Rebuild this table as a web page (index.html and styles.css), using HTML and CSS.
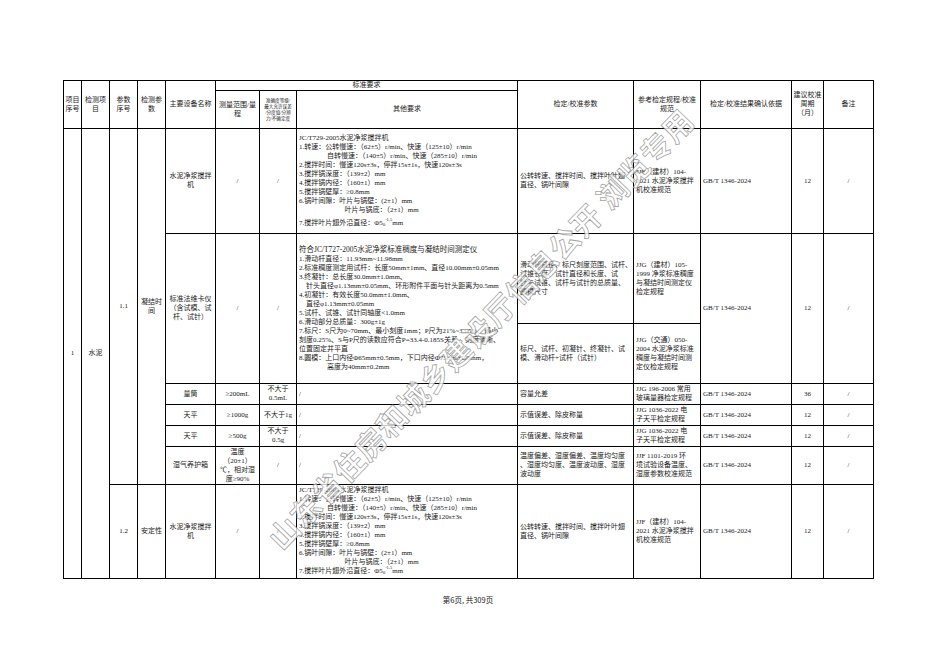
FILE: index.html
```html
<!DOCTYPE html>
<html lang="zh-CN">
<head>
<meta charset="utf-8">
<title>检测设备表</title>
<link rel="stylesheet" href="styles.css">
</head>
<body>
<div class="page">
<table class="sheet">
<colgroup>
<col class="w-no"><col class="w-item"><col class="w-pno"><col class="w-param"><col class="w-dev"><col class="w-range"><col class="w-acc"><col class="w-other"><col class="w-cal"><col class="w-ref"><col class="w-basis"><col class="w-cycle"><col class="w-note">
</colgroup>
<thead>
<tr class="h1">
<th rowspan="2">项目<br>序号</th>
<th rowspan="2">检测项<br>目</th>
<th rowspan="2">参数<br>序号</th>
<th rowspan="2">检测参<br>数</th>
<th rowspan="2">主要设备名称</th>
<th colspan="3">标准要求</th>
<th rowspan="2">检定/校准参数</th>
<th rowspan="2">参考检定规程/校准<br>规范</th>
<th rowspan="2">检定/校准结果确认依据</th>
<th rowspan="2">建议校准<br>周期<br>（月）</th>
<th rowspan="2">备注</th>
</tr>
<tr class="h2">
<th>测量范围/量<br>程</th>
<th class="tiny">准确度等级/<br>最大允许误差<br>/分度值/分辨<br>力/不确定度</th>
<th>其他要求</th>
</tr>
</thead>
<tbody>
<tr class="ra">
<td rowspan="8" class="c">1</td>
<td rowspan="8" class="c">水泥</td>
<td rowspan="7" class="c">1.1</td>
<td rowspan="7" class="c">凝结时<br>间</td>
<td class="c">水泥净浆搅拌<br>机</td>
<td class="c">/</td>
<td class="c">/</td>
<td class="txt">
<div>JC/T729-2005水泥净浆搅拌机</div>
<div>1.转速：公转慢速：（62±5）r/min、快速（125±10）r/min</div>
<div class="in4">自转慢速：（140±5）r/min、快速（285±10）r/min</div>
<div>2.搅拌时间：慢速120s±3s，停拌15s±1s，快速120s±3s</div>
<div>3.搅拌锅深度：（139±2）mm</div>
<div>4.搅拌锅内径：（160±1）mm</div>
<div>5.搅拌锅壁厚：≥0.8mm</div>
<div>6.锅叶间隙：叶片与锅壁：(2±1）mm</div>
<div class="in6">叶片与锅底：（2±1）mm</div>
<div class="gap">7.搅拌叶片翅外沿直径：Φ5<sub>0</sub><sup>-1.5</sup>mm</div>
</td>
<td>公转转速、搅拌时间、搅拌叶叶翅<br>直径、锅叶间隙</td>
<td>JJF（建材）104-<br>2021 水泥净浆搅拌<br>机校准规范</td>
<td>GB/T 1346-2024</td>
<td class="c">12</td>
<td class="c">/</td>
</tr>
<tr class="rb1">
<td rowspan="2" class="c">标准法维卡仪<br>（含试模、试<br>杆、试针）</td>
<td rowspan="2" class="c">/</td>
<td rowspan="2" class="c">/</td>
<td rowspan="2" class="txt">
<div class="lead">符合JC/T727-2005水泥净浆标准稠度与凝结时间测定仪</div>
<div>1.滑动杆直径：11.93mm~11.98mm</div>
<div>2.标准稠度测定用试杆：长度50mm±1mm、直径10.00mm±0.05mm</div>
<div>3.终凝针：总长度30.0mm±1.0mm、</div>
<div class="in1">针头直径φ1.13mm±0.05mm、环形附件平面与针头距离为0.5mm</div>
<div>4.初凝针：有效长度50.0mm±1.0mm、</div>
<div class="in1">直径φ1.13mm±0.05mm</div>
<div>5.试杆、试锥、试针同轴度&lt;1.0mm</div>
<div>6.滑动部分总质量：300g±1g</div>
<div>7.标尺：S尺为0~70mm、最小刻度1mm；P尺为21%~33.5%、最小</div>
<div>刻度0.25%、S与P尺的读数应符合P=33.4-0.185S关系，刻度清晰、</div>
<div>位置固定并平直</div>
<div>8.圆模：上口内径Φ65mm±0.5mm，下口内径Φ75mm±0.5mm，</div>
<div class="in4">高度为40mm±0.2mm</div>
</td>
<td>滑动杆直径、标尺刻度范围、试杆、<br>试锥长度、试针直径和长度、试<br>针与试锥、试杆与试针的总质量、<br>圆模尺寸</td>
<td>JJG（建材）105-<br>1999 净浆标准稠度<br>与凝结时间测定仪<br>检定规程</td>
<td rowspan="2">GB/T 1346-2024</td>
<td rowspan="2" class="c">12</td>
<td rowspan="2" class="c">/</td>
</tr>
<tr class="rb2">
<td>标尺、试杆、初凝针、终凝针、试<br>模、滑动杆+试杆（试针）</td>
<td>JJG（交通）050-<br>2004 水泥净浆标准<br>稠度与凝结时间测<br>定仪检定规程</td>
</tr>
<tr class="rq">
<td class="c">量筒</td>
<td class="c">≥200mL</td>
<td class="c">不大于<br>0.5mL</td>
<td>/</td>
<td>容量允差</td>
<td>JJG 196-2006 常用<br>玻璃量器检定规程</td>
<td>GB/T 1346-2024</td>
<td class="c">36</td>
<td class="c">/</td>
</tr>
<tr class="rq">
<td class="c">天平</td>
<td class="c">≥1000g</td>
<td class="c">不大于1g</td>
<td>/</td>
<td>示值误差、除皮称量</td>
<td>JJG 1036-2022 电<br>子天平检定规程</td>
<td>GB/T 1346-2024</td>
<td class="c">12</td>
<td class="c">/</td>
</tr>
<tr class="rq">
<td class="c">天平</td>
<td class="c">≥500g</td>
<td class="c">不大于<br>0.5g</td>
<td>/</td>
<td>示值误差、除皮称量</td>
<td>JJG 1036-2022 电<br>子天平检定规程</td>
<td>GB/T 1346-2024</td>
<td class="c">12</td>
<td class="c">/</td>
</tr>
<tr class="rh">
<td class="c">湿气养护箱</td>
<td class="c">温度<br>（20±1）<br>℃，相对湿<br>度≥90%</td>
<td class="c">/</td>
<td>/</td>
<td>温度偏差、湿度偏差、温度均匀度<br>、湿度均匀度、温度波动度、湿度<br>波动度</td>
<td>JJF 1101-2019 环<br>境试验设备温度、<br>湿度参数校准规范</td>
<td>GB/T 1346-2024</td>
<td class="c">12</td>
<td class="c">/</td>
</tr>
<tr class="rs">
<td class="c">1.2</td>
<td class="c">安定性</td>
<td class="c">水泥净浆搅拌<br>机</td>
<td class="c">/</td>
<td class="c">/</td>
<td class="txt top">
<div>JC/T729-2005水泥净浆搅拌机</div>
<div>1.转速：公转慢速：（62±5）r/min、快速（125±10）r/min</div>
<div class="in4">自转慢速：（140±5）r/min、快速（285±10）r/min</div>
<div>2.搅拌时间：慢速120s±3s，停拌15s±1s，快速120s±3s</div>
<div>3.搅拌锅深度：（139±2）mm</div>
<div>4.搅拌锅内径：（160±1）mm</div>
<div>5.搅拌锅壁厚：≥0.8mm</div>
<div>6.锅叶间隙：叶片与锅壁：(2±1）mm</div>
<div class="in6">叶片与锅底：（2±1）mm</div>
<div>7.搅拌叶片翅外沿直径：Φ5<sub>0</sub><sup>-1.5</sup>mm</div>
</td>
<td>公转转速、搅拌时间、搅拌叶叶翅<br>直径、锅叶间隙</td>
<td>JJF（建材）104-<br>2021 水泥净浆搅拌<br>机校准规范</td>
<td>GB/T 1346-2024</td>
<td class="c">12</td>
<td class="c">/</td>
</tr>
</tbody>
</table>
<div class="footer">第6页, 共309页</div>
<div class="watermark">山东省住房和城乡建设厅信息公开 浏览专用</div>
</div>
</body>
</html>
```

FILE: styles.css
```css
* { box-sizing: border-box; }
html, body { margin: 0; padding: 0; background: #fff; }
body {
  font-family: "Liberation Serif", "Noto Sans CJK SC", serif;
  color: #1a1a1a;
}
.page {
  position: relative;
  width: 936px;
  height: 662px;
  padding: 80px 0 0 63px;
  overflow: hidden;
}
.sheet {
  border-collapse: collapse;
  table-layout: fixed;
  width: 810px;
  font-size: 7px;
  line-height: 9px;
}
.w-no { width: 18px; }
.w-item { width: 28px; }
.w-pno { width: 28px; }
.w-param { width: 28px; }
.w-dev { width: 50px; }
.w-range { width: 44px; }
.w-acc { width: 37px; }
.w-other { width: 221px; }
.w-cal { width: 116px; }
.w-ref { width: 67px; }
.w-basis { width: 91px; }
.w-cycle { width: 32px; }
.w-note { width: 50px; }

.sheet th, .sheet td {
  border: 1px solid #000;
  padding: 0 1px 0 2px;
  vertical-align: middle;
  font-weight: normal;
  overflow: hidden;
  white-space: nowrap;
}
.sheet th { text-align: center; padding: 0; }
.sheet td { text-align: left; }
.sheet td.c { text-align: center; padding: 0; }
.sheet th.tiny { font-size: 4.6px; line-height: 6px; }

.h1 { height: 9px; }
.h2 { height: 38px; }
.ra { height: 105px; }
.rb1 { height: 90px; }
.rb2 { height: 60px; }
.rq { height: 21px; }
.rh { height: 38px; }
.rs { height: 94px; }

.txt div { white-space: nowrap; }
.txt .lead { font-size: 7.5px; line-height: 10px; }
.txt .in1 { padding-left: 1em; }
.txt .in4 { padding-left: 4em; }
.txt .in6 { padding-left: 6.5em; }
.txt .gap { margin-top: 4px; }
.sheet td.top { vertical-align: top; padding-top: 1px; }
.txt sub, .txt sup { font-size: 4.5px; line-height: 0; }
.txt sub { vertical-align: -1px; }
.txt sup { vertical-align: 4px; }

.footer {
  width: 810px;
  margin-top: 16px;
  text-align: center;
  font-family: "Noto Sans CJK SC", "Liberation Sans", sans-serif;
  font-size: 7.5px;
  line-height: 10px;
  color: #222;
}
.watermark {
  position: absolute;
  left: 480px;
  top: 328px;
  transform: translate(-50%, -50%) rotate(-46deg);
  white-space: nowrap;
  font-family: "Noto Sans CJK SC", sans-serif;
  font-weight: 700;
  font-size: 30px;
  letter-spacing: 1px;
  color: rgba(255, 255, 255, 0.8);
  -webkit-text-stroke: 0.8px rgba(120, 120, 120, 0.7);
  pointer-events: none;
}
```
